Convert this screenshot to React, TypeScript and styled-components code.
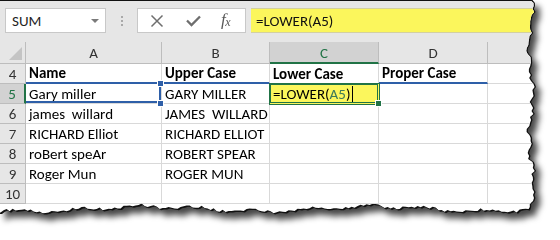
import React from 'react';
import styled, { createGlobalStyle } from 'styled-components';

const Global = createGlobalStyle`
  html, body { margin: 0; padding: 0; background: #ffffff; }
  body {
    width: 560px;
    height: 240px;
    overflow: hidden;
    font-family: Carlito, Calibri, Lato, "Liberation Sans", sans-serif;
  }
`;

const SHEET_W = 548;
const SHEET_H = 224;

function makeRand(seed: number) {
  let s = seed;
  return () => {
    s = (s * 16807) % 2147483647;
    return s / 2147483647;
  };
}

function buildClips() {
  const r = makeRand(11);
  const right: [number, number][] = [];
  for (let y = 0; y <= 208; y += 3) {
    const x = 532 + 2.2 * Math.sin(y / 14 + 1.2) + 1.4 * Math.sin(y / 4.3) + (r() - 0.5) * 3.2;
    right.push([x, y]);
  }
  const bottom: [number, number][] = [];
  for (let x = 530; x >= 0; x -= 3) {
    const y = 210 + 2.4 * Math.sin(x / 36 + 0.5) + 1.5 * Math.sin(x / 9.1 + 2) + (r() - 0.5) * 3;
    bottom.push([x, y]);
  }
  const outer = [
    '0px 0px',
    ...right.map(([x, y]) => `${x.toFixed(1)}px ${y.toFixed(1)}px`),
    ...bottom.map(([x, y]) => `${x.toFixed(1)}px ${y.toFixed(1)}px`),
    `0px ${bottom[bottom.length - 1][1].toFixed(1)}px`,
  ].join(',');
  const inner = [
    '0px 1px',
    ...right.map(([x, y]) => `${(x - 1.4).toFixed(1)}px ${Math.max(y, 1).toFixed(1)}px`),
    ...bottom.map(([x, y]) => `${(x - 1.4).toFixed(1)}px ${(y - 1.4).toFixed(1)}px`),
    `0px ${(bottom[bottom.length - 1][1] - 1.4).toFixed(1)}px`,
  ].join(',');
  return { outer: `polygon(${outer})`, inner: `polygon(${inner})` };
}

const clips = buildClips();

const Stage = styled.div`
  width: 560px;
  height: 240px;
  background: #ffffff;
`;

const Shadow = styled.div`
  width: ${SHEET_W}px;
  height: ${SHEET_H}px;
  filter: drop-shadow(5px 6px 3px rgba(0, 0, 0, 0.72));
`;

const Edge = styled.div`
  width: ${SHEET_W}px;
  height: ${SHEET_H}px;
  background: #111111;
`;

const Sheet = styled.div`
  width: ${SHEET_W}px;
  height: ${SHEET_H}px;
  background: #ffffff;
  display: flex;
  flex-direction: column;
`;

/* ---------- formula bar ---------- */

const Toolbar = styled.div`
  height: 42px;
  box-sizing: border-box;
  padding: 8px 0 0 5px;
  background: #e6e6e6;
  display: flex;
  align-items: flex-start;
`;

const NameBox = styled.div`
  width: 101px;
  height: 25px;
  box-sizing: border-box;
  border: 1px solid #c8c8c8;
  background: #ffffff;
  display: flex;
  align-items: center;
  justify-content: space-between;
  padding: 0 6px 0 6px;
  font-size: 15px;
  color: #222;
`;

const DropArrow = styled.span`
  width: 0;
  height: 0;
  border-left: 4px solid transparent;
  border-right: 4px solid transparent;
  border-top: 4px solid #7a7a7a;
  margin-top: 1px;
`;

const Grip = styled.div`
  width: 31px;
  height: 25px;
  display: flex;
  flex-direction: column;
  align-items: center;
  justify-content: center;
  gap: 2px;
`;

const GripDot = styled.span`
  width: 2px;
  height: 2px;
  background: #a9a9a9;
`;

const ButtonBox = styled.div`
  width: 109px;
  height: 25px;
  box-sizing: border-box;
  border: 1px solid #c8c8c8;
  background: #ffffff;
  display: grid;
  grid-template-columns: 38px 34px 1fr;
  align-items: center;
  justify-items: center;
  padding-right: 4px;
`;

const Fx = styled.span`
  font-family: "Liberation Serif", serif;
  font-style: italic;
  font-size: 17px;
  color: #5a5a5a;
  letter-spacing: -0.5px;
  margin-top: -2px;
  & > sub {
    font-size: 12px;
    vertical-align: -1px;
  }
`;

const FormulaInput = styled.div`
  flex: 1;
  margin-left: 5px;
  height: 25px;
  box-sizing: border-box;
  border-top: 1px solid #d3d0a0;
  border-bottom: 1px solid #d3d0a0;
  background: #fbf65c;
  font-size: 15px;
  color: #111;
  display: flex;
  align-items: center;
  padding-left: 5px;
`;

/* ---------- grid ---------- */

const Grid = styled.div`
  display: grid;
  grid-template-columns: 26px 136px 108px 109px 109px 1fr;
  grid-template-rows: 22px repeat(7, 20px);
  font-size: 15px;
`;

const Corner = styled.div`
  background: #e6e6e6;
  border-right: 1px solid #bdbdbd;
  border-bottom: 1px solid #bdbdbd;
  display: flex;
  align-items: flex-end;
  justify-content: flex-end;
  padding: 0 3px 3px 0;
`;

const CornerTri = styled.span`
  width: 0;
  height: 0;
  border-left: 13px solid transparent;
  border-bottom: 13px solid #c4c4c4;
`;

const ColHead = styled.div<{ $sel?: boolean }>`
  background: ${(p) => (p.$sel ? '#d2d2d2' : '#e6e6e6')};
  border-right: 1px solid #bdbdbd;
  border-bottom: ${(p) => (p.$sel ? '2px solid #217346' : '1px solid #bdbdbd')};
  color: ${(p) => (p.$sel ? '#217346' : '#333')};
  display: flex;
  align-items: center;
  justify-content: center;
  padding-top: 1px;
  box-sizing: border-box;
`;

const RowHead = styled.div<{ $sel?: boolean }>`
  background: ${(p) => (p.$sel ? '#d2d2d2' : '#e6e6e6')};
  border-right: ${(p) => (p.$sel ? '2px solid #217346' : '1px solid #bdbdbd')};
  border-bottom: 1px solid #bdbdbd;
  color: ${(p) => (p.$sel ? '#217346' : '#333')};
  display: flex;
  align-items: center;
  justify-content: center;
  box-sizing: border-box;
`;

const Cell = styled.div<{ $bold?: boolean; $under?: 'blue' | 'none' }>`
  position: relative;
  box-sizing: border-box;
  border-right: 1px solid #d9d9d9;
  border-bottom: ${(p) => (p.$under === 'blue' ? '2px solid #2e5fa8' : '1px solid #d9d9d9')};
  padding: 0 3px;
  display: flex;
  align-items: center;
  white-space: pre;
  color: #000;
  font-weight: ${(p) => (p.$bold ? 700 : 400)};
  overflow: visible;
`;

const RefCell = styled(Cell)`
  box-shadow: inset -2px -2px 0 #2e5fa8;
  &::before,
  &::after {
    content: '';
    position: absolute;
    right: -3px;
    width: 5px;
    height: 5px;
    background: #2e5fa8;
    border: 1px solid #fff;
    z-index: 3;
  }
  &::before { top: -4px; }
  &::after { bottom: -4px; }
`;

const ActiveCell = styled(Cell)`
  background: #fbf65c;
  box-shadow: 0 0 0 1px #217346, inset 0 0 0 1px #217346;
  z-index: 2;
  border-color: transparent;
  &::after {
    content: '';
    position: absolute;
    right: -4px;
    bottom: -4px;
    width: 5px;
    height: 5px;
    background: #217346;
    border: 1px solid #fff;
  }
`;

const RefText = styled.span`
  color: #3e7a5a;
`;

const Caret = styled.span`
  display: inline-block;
  width: 1px;
  height: 16px;
  background: #000;
  margin-left: 2px;
`;

const data: string[][] = [
  ['Gary miller', 'GARY MILLER'],
  ['james  willard', 'JAMES  WILLARD'],
  ['RICHARD Elliot', 'RICHARD ELLIOT'],
  ['roBert speAr', 'ROBERT SPEAR'],
  ['Roger Mun', 'ROGER MUN'],
];

function XIcon() {
  return (
    <svg width="14" height="14" viewBox="0 0 14 14">
      <path d="M1.5 1.5 L12.5 12.5 M12.5 1.5 L1.5 12.5" stroke="#6e6e6e" strokeWidth="1.5" fill="none" />
    </svg>
  );
}

function CheckIcon() {
  return (
    <svg width="15" height="12" viewBox="0 0 15 12">
      <path d="M1 5.5 L5.5 10 L14 1.5" stroke="#6e6e6e" strokeWidth="2.3" fill="none" />
    </svg>
  );
}

export default function App() {
  return (
    <Stage>
      <Global />
      <Shadow>
        <Edge style={{ clipPath: clips.outer }}>
          <Sheet style={{ clipPath: clips.inner }}>
            <Toolbar>
              <NameBox>
                SUM
                <DropArrow />
              </NameBox>
              <Grip>
                <GripDot />
                <GripDot />
                <GripDot />
              </Grip>
              <ButtonBox>
                <XIcon />
                <CheckIcon />
                <Fx>
                  f<sub>x</sub>
                </Fx>
              </ButtonBox>
              <FormulaInput>=LOWER(A5)</FormulaInput>
            </Toolbar>
            <Grid>
              <Corner>
                <CornerTri />
              </Corner>
              <ColHead>A</ColHead>
              <ColHead>B</ColHead>
              <ColHead $sel>C</ColHead>
              <ColHead>D</ColHead>
              <ColHead />

              <RowHead>4</RowHead>
              <Cell $bold $under="blue">Name</Cell>
              <Cell $bold $under="blue">Upper Case</Cell>
              <Cell $bold>Lower Case</Cell>
              <Cell $bold $under="blue">Proper Case</Cell>
              <Cell />

              {data.map((row, i) => {
                const n = i + 5;
                return (
                  <React.Fragment key={n}>
                    <RowHead $sel={n === 5}>{n}</RowHead>
                    {n === 5 ? <RefCell>{row[0]}</RefCell> : <Cell>{row[0]}</Cell>}
                    <Cell>{row[1]}</Cell>
                    {n === 5 ? (
                      <ActiveCell>
                        =LOWER(<RefText>A5</RefText>)<Caret />
                      </ActiveCell>
                    ) : (
                      <Cell />
                    )}
                    <Cell />
                    <Cell />
                  </React.Fragment>
                );
              })}

              <RowHead>10</RowHead>
              <Cell />
              <Cell />
              <Cell />
              <Cell />
              <Cell />
            </Grid>
          </Sheet>
        </Edge>
      </Shadow>
    </Stage>
  );
}
